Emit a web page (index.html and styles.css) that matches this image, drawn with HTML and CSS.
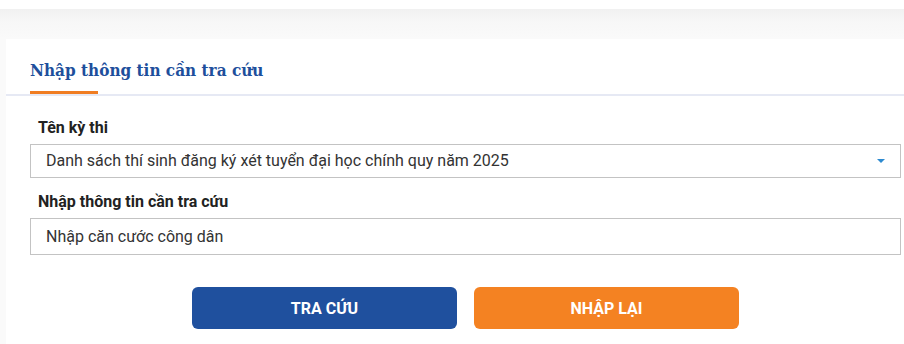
FILE: index.html
```html
<!DOCTYPE html>
<html lang="vi">
<head>
<meta charset="utf-8">
<title>Tra cứu</title>
<link rel="stylesheet" href="styles.css">
</head>
<body>
<div class="topbar"></div>
<div class="page">
  <section class="card">
    <div class="card-head">
      <h2 class="card-title">Nhập thông tin cần tra cứu</h2>
      <div class="title-bar"></div>
    </div>
    <form class="form">
      <label class="label">Tên kỳ thi</label>
      <div class="select">
        <span class="select-text">Danh sách thí sinh đăng ký xét tuyển đại học chính quy năm 2025</span>
        <span class="caret"></span>
      </div>
      <label class="label label-2">Nhập thông tin cần tra cứu</label>
      <div class="input">Nhập căn cước công dân</div>
      <div class="actions">
        <button type="button" class="btn btn-primary">TRA CỨU</button>
        <button type="button" class="btn btn-orange">NHẬP LẠI</button>
      </div>
    </form>
  </section>
</div>
</body>
</html>
```
FILE: styles.css
```css
* { box-sizing: border-box; }
html, body { margin: 0; padding: 0; }
body {
  width: 904px;
  height: 344px;
  overflow: hidden;
  background: #fafafa;
  font-family: Roboto, "Noto Sans", sans-serif;
}
.topbar {
  height: 9px;
  background: #ffffff;
}
.page {
  background: linear-gradient(#f1f1f1 0px, #f7f7f7 12px, #fafafa 30px);
  padding: 30px 0 0 6px;
  height: 335px;
}
.card {
  width: 925px;
  background: #ffffff;
  height: 320px;
}
.card-head {
  padding: 20px 0 0 24px;
  border-bottom: 2px solid #e6e9f4;
}
.card-title {
  margin: 0;
  font-family: "DejaVu Serif", "Liberation Serif", serif;
  font-stretch: condensed;
  font-weight: bold;
  font-size: 17px;
  line-height: 22px;
  color: #1e4f9c;
  padding-bottom: 10px;
}
.title-bar {
  width: 68px;
  height: 3px;
  background: #f07d22;
}
.form {
  padding: 22px 30px 0 24px;
  display: flex;
  flex-direction: column;
}
.label {
  display: block;
  padding-left: 8px;
  font-weight: bold;
  font-size: 16px;
  line-height: 20px;
  color: #222222;
  margin-bottom: 6px;
}
.label-2 { margin-top: 14px; }
.select {
  height: 34px;
  border: 1px solid #c3c3c3;
  display: flex;
  align-items: center;
  justify-content: space-between;
  padding: 0 15px 0 15px;
  font-size: 16px;
  line-height: 32px;
  color: #333333;
}
.caret {
  width: 0;
  height: 0;
  border-left: 4px solid transparent;
  border-right: 4px solid transparent;
  border-top: 4px solid #2d8ad0;
  margin-right: 0;
}
.input {
  height: 37px;
  border: 1px solid #c3c3c3;
  padding: 0 15px;
  font-size: 16px;
  line-height: 35px;
  color: #333333;
}
.actions {
  display: flex;
  justify-content: center;
  gap: 17px;
  margin-top: 32px;
}
.btn {
  width: 265px;
  height: 42px;
  border: none;
  border-radius: 6px;
  font-family: Roboto, "Noto Sans", sans-serif;
  font-weight: bold;
  font-size: 16px;
  color: #ffffff;
  padding: 0;
}
.btn-primary { background: #1f509e; }
.btn-orange { background: #f48222; }
```
